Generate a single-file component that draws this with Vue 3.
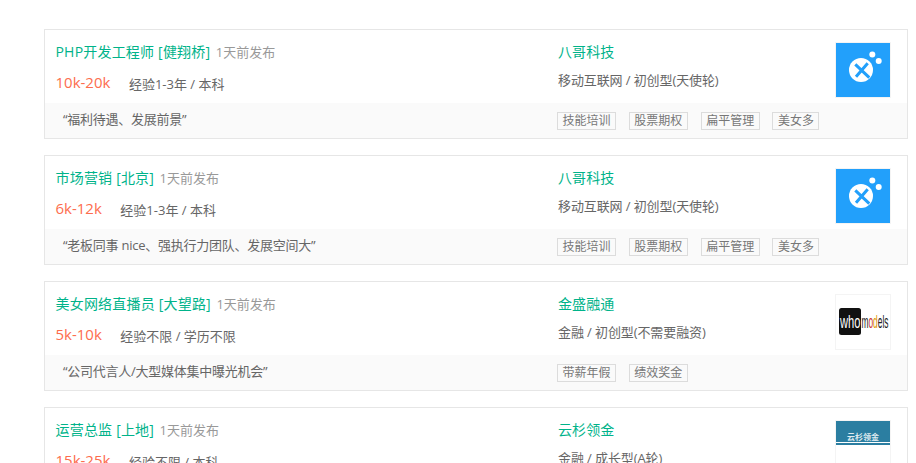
<script setup>
const jobs = [
  { title: 'PHP开发工程师 [健翔桥]', time: '1天前发布', salary: '10k-20k', req: '经验1-3年 / 本科', company: '八哥科技', industry: '移动互联网 / 初创型(天使轮)', quote: '“福利待遇、发展前景”', tags: ['技能培训', '股票期权', '扁平管理', '美女多'], logo: 'bage' },
  { title: '市场营销 [北京]', time: '1天前发布', salary: '6k-12k', req: '经验1-3年 / 本科', company: '八哥科技', industry: '移动互联网 / 初创型(天使轮)', quote: '“老板同事 nice、强执行力团队、发展空间大”', tags: ['技能培训', '股票期权', '扁平管理', '美女多'], logo: 'bage' },
  { title: '美女网络直播员 [大望路]', time: '1天前发布', salary: '5k-10k', req: '经验不限 / 学历不限', company: '金盛融通', industry: '金融 / 初创型(不需要融资)', quote: '“公司代言人/大型媒体集中曝光机会”', tags: ['带薪年假', '绩效奖金'], logo: 'who' },
  { title: '运营总监 [上地]', time: '1天前发布', salary: '15k-25k', req: '经验不限 / 本科', company: '云杉领金', industry: '金融 / 成长型(A轮)', quote: '', tags: [], logo: 'yun' }
]
</script>

<template>
  <div class="page">
    <article v-for="job in jobs" :key="job.title" class="card">
      <div class="top">
        <div class="main">
          <div class="title-row">
            <span class="title">{{ job.title }}</span>
            <span class="time">{{ job.time }}</span>
          </div>
          <div class="meta-row">
            <span class="salary">{{ job.salary }}</span>
            <span class="req">{{ job.req }}</span>
          </div>
        </div>
        <div class="company">
          <div class="company-name">{{ job.company }}</div>
          <div class="industry">{{ job.industry }}</div>
        </div>
        <div class="logo">
          <svg v-if="job.logo === 'bage'" viewBox="0 0 54 54" width="54" height="54">
            <rect width="54" height="54" fill="#22a0fb" />
            <circle cx="25" cy="27" r="12" fill="#fff" />
            <path d="M19.3 21.3 L33.3 34.7 M31.7 20.3 L20 33.7" stroke="#22a0fb" stroke-width="3" />
            <circle cx="36.3" cy="11.5" r="3" fill="#fff" />
            <circle cx="42.7" cy="18" r="3" fill="#fff" />
          </svg>
          <svg v-else-if="job.logo === 'who'" viewBox="0 0 54 54" width="54" height="54">
            <rect width="54" height="54" fill="#fff" />
            <rect x="3" y="13" width="22" height="27" rx="2.5" fill="#111" />
            <text transform="translate(4 33) scale(0.62 1)" class="who-w">who</text>
            <text transform="translate(25.5 33) scale(0.44 1)" class="who-m">m<tspan fill="#c33">o</tspan><tspan fill="#d90">d</tspan>els</text>
          </svg>
          <svg v-else viewBox="0 0 54 54" width="54" height="54">
            <rect width="54" height="54" fill="#fff" />
            <rect width="54" height="21" fill="#2b7ea1" />
            <rect y="22" width="54" height="2" fill="#2b7ea1" />
            <text x="27" y="18.5" class="yun">云杉领金</text>
          </svg>
        </div>
      </div>
      <div class="bottom">
        <div class="quote">{{ job.quote }}</div>
        <div class="tags">
          <span v-for="tag in job.tags" :key="tag" class="tag">{{ tag }}</span>
        </div>
      </div>
    </article>
  </div>
</template>

<style>
html, body { background: #fff; overflow: hidden; height: 463px; }
</style>

<style scoped>
.page {
  padding: 29px 8px 0 44px;
  display: flex;
  flex-direction: column;
  gap: 16px;
  font-family: "Open Sans", "Noto Sans CJK SC", sans-serif;
}
.card {
  border: 1px solid #e6e6e6;
  height: 110px;
  box-sizing: border-box;
  flex: none;
  display: flex;
  flex-direction: column;
}
.top {
  height: 73px;
  flex: none;
  display: flex;
  padding: 0 17px 0 10.5px;
}
.main { width: 502.5px; flex: none; }
.title-row { margin-top: 10px; height: 22px; line-height: 22px; white-space: nowrap; }
.title { color: #00b38a; font-size: 14px; letter-spacing: 0.2px; }
.time { color: #999; font-size: 13px; margin-left: 5.5px; }
.meta-row { margin-top: 9px; height: 22px; line-height: 22px; white-space: nowrap; }
.salary { color: #fd6d4e; font-size: 15px; display: inline-block; margin-right: 18.5px; vertical-align: 1px; }
.req { color: #666; font-size: 13px; }
.company { width: 278px; flex: none; }
.company-name { margin-top: 11px; height: 22px; line-height: 22px; color: #00b38a; font-size: 14px; letter-spacing: 0.1px; }
.industry { margin-top: 6px; height: 22px; line-height: 22px; color: #666; font-size: 13px; letter-spacing: -0.1px; }
.logo { width: 54px; height: 54px; margin-top: 13px; flex: none; outline: 1px solid #f4f4f4; }
.logo svg { display: block; }
.bottom {
  flex: 1;
  background: #fafafa;
  display: flex;
  padding-left: 18px;
}
.quote { width: 494px; flex: none; color: #666; font-size: 13px; letter-spacing: -0.25px; line-height: 33px; white-space: nowrap; }
.tags { display: flex; gap: 12.8px; padding-top: 9px; }
.tag {
  height: 18px;
  box-sizing: border-box;
  border: 1px solid #dcdcdc;
  padding: 0 4.5px;
  font-size: 12px;
  line-height: 16px;
  color: #777;
  white-space: nowrap;
}
.who-w { font-family: "Liberation Sans", sans-serif; font-size: 18px; fill: #fff; }
.who-m { font-family: "Liberation Sans", sans-serif; font-size: 19px; fill: #222; }
.yun { font-family: "Noto Sans CJK SC", sans-serif; font-size: 8px; font-weight: 700; fill: #dfeaf0; text-anchor: middle; }
</style>
